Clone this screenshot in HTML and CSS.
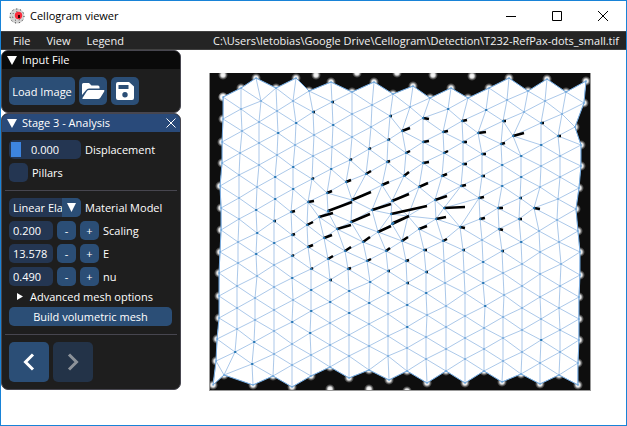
FILE: index.html
```html
<!DOCTYPE html>
<html lang="en">
<head>
<meta charset="utf-8">
<title>Cellogram viewer</title>
<link rel="stylesheet" href="styles.css">
</head>
<body>
<div class="window">
  <header class="titlebar">
    <svg class="app-icon" viewBox="0 0 16 16" aria-hidden="true">
      <circle cx="8" cy="8" r="7.5" fill="#d3d3d3"/>
      <circle cx="8" cy="8" r="7" fill="none" stroke="#222" stroke-width="1" stroke-dasharray="1 3"/>
      <circle cx="8" cy="8" r="4.5" fill="none" stroke="#444" stroke-width="1" stroke-dasharray="1 3"/>
      <circle cx="9.5" cy="7.500" r="3.700" fill="#fb2b3c"/>
      <rect x="9" y="7" width="2" height="3" fill="#300"/>
    </svg>
    <h1 class="app-title">Cellogram viewer</h1>
    <div class="window-buttons">
      <button type="button" aria-label="Minimize"><svg viewBox="0 0 10 10"><path d="M0 5.500H10"/></svg></button>
      <button type="button" aria-label="Maximize"><svg viewBox="0 0 10 10"><path d="M.5 .5H9.500V9.500H.5Z"/></svg></button>
      <button type="button" aria-label="Close"><svg viewBox="0 0 10 10"><path d="M0 0L10 10M10 0L0 10"/></svg></button>
    </div>
  </header>
  <nav class="menubar">
    <button type="button">File</button>
    <button type="button">View</button>
    <button type="button">Legend</button>
    <span class="path">C:\Users\letobias\Google Drive\Cellogram\Detection\T232-RefPax-dots_small.tif</span>
  </nav>
  <main class="workspace">
    <aside class="sidebar">
      <section class="panel">
        <h2 class="panel-head"><svg class="caret" viewBox="0 0 10 9"><path d="M0 0H10L5 9Z"/></svg>Input File</h2>
        <div class="panel-body">
          <div class="row">
            <button type="button" class="btn load">Load Image</button>
            <button type="button" class="btn tool" aria-label="Open folder"><svg viewBox="0 0 24 18"><path d="M1 13V2.500Q1 1 2.500 1H8L10.500 3.500H17Q18.500 3.500 18.500 5V6.500H8Q6 6.500 5 8.200Z"/><path d="M1.500 16L6 9Q6.700 8 8 8H22.500Q24 8 23.200 9.400L19.500 15.600Q18.800 17 17.300 17H2Q1 17 1.500 16Z"/></svg></button>
            <button type="button" class="btn tool" aria-label="Save"><svg viewBox="0 0 24 18"><path fill-rule="evenodd" d="M5 0H16L21 4.500V16Q21 18 19 18H5Q3 18 3 16V2Q3 0 5 0ZM5.500 3V7H15.500V3ZM12 10A2.700 2.700 0 1 0 12 15.400A2.700 2.700 0 1 0 12 10Z"/></svg></button>
          </div>
        </div>
      </section>
      <section class="panel active">
        <h2 class="panel-head"><svg class="caret" viewBox="0 0 10 9"><path d="M0 0H10L5 9Z"/></svg>Stage 3 - Analysis
          <button type="button" class="panel-close" aria-label="Close panel"><svg viewBox="0 0 10 10"><path d="M.5 .5L9.500 9.500M9.500 .5L.5 9.500"/></svg></button>
        </h2>
        <div class="panel-body">
          <div class="row">
            <span class="slider"><input type="range" id="disp" min="0" max="1" step="0.001" value="0"><output for="disp">0.000</output></span>
            <label for="disp">Displacement</label>
          </div>
          <div class="row"><input type="checkbox" id="pillars" class="check"><label for="pillars">Pillars</label></div>
          <hr>
          <div class="row">
            <span class="combo"><select id="model"><option>Linear Elasticity</option></select><svg viewBox="0 0 19 19" aria-hidden="true"><path d="M5 5H14L9.500 14Z"/></svg></span>
            <label for="model">Material Model</label>
          </div>
          <div class="row"><input class="num" id="scaling" type="text" value="0.200"><button type="button" class="btn step">-</button><button type="button" class="btn step">+</button><label for="scaling">Scaling</label></div>
          <div class="row"><input class="num" id="young" type="text" value="13.578"><button type="button" class="btn step">-</button><button type="button" class="btn step">+</button><label for="young">E</label></div>
          <div class="row"><input class="num" id="nu" type="text" value="0.490"><button type="button" class="btn step">-</button><button type="button" class="btn step">+</button><label for="nu">nu</label></div>
          <details class="advanced"><summary><svg viewBox="0 0 6 7"><path d="M0 0L6 3.500L0 7Z"/></svg>Advanced mesh options</summary></details>
          <button type="button" class="btn wide">Build volumetric mesh</button>
          <hr>
          <div class="row">
            <button type="button" class="btn nav" aria-label="Previous stage"><svg viewBox="0 0 12 18"><path d="M10 1.500L2.500 9L10 16.500"/></svg></button>
            <button type="button" class="btn nav" aria-label="Next stage" disabled><svg viewBox="0 0 12 18"><path d="M2 1.500L9.500 9L2 16.500"/></svg></button>
          </div>
        </div>
      </section>
    </aside>
    <div class="viewer">
      <svg class="mesh" id="mesh" viewBox="209 73 382 318" role="img" aria-label="Displacement mesh">
        <defs>
          <radialGradient id="dot"><stop offset="0" stop-color="#fff"/><stop offset=".4" stop-color="#fff" stop-opacity=".9"/><stop offset=".7" stop-color="#fff" stop-opacity=".35"/><stop offset="1" stop-color="#fff" stop-opacity="0"/></radialGradient>
          <clipPath id="inside"><path id="clip"/></clipPath>
          <clipPath id="photo"><rect x="210" y="73" width="380" height="317"/></clipPath>
        </defs>
        <rect class="frame" x="209" y="73" width="382" height="318"/>
        <rect class="image" x="210" y="73" width="380" height="317"/>
        <g id="dots" clip-path="url(#photo)"></g>
        <path id="outline" class="sheet"/>
        <path id="edges" class="edges" clip-path="url(#inside)"/>
        <path id="joints" class="joints"/>
        <path id="vectors" class="vectors"/>
        <path id="nodes" class="nodes"/>
      </svg>
    </div>
  </main>
</div>
<script src="mesh.js"></script>
</body>
</html>
```
FILE: styles.css
```css
* { box-sizing: border-box; }
body { margin: 0; background: #fff; font: 11px/19px "Open Sans", "Noto Sans", sans-serif; color: #fff; }
button, input, select { font: inherit; color: inherit; margin: 0; border: 0; padding: 0; }
button { background: none; }
.window { min-height: 100vh; border: 1px solid #1883d7; }

.titlebar { display: flex; align-items: center; height: 30px; padding-left: 8px; background: #fff; color: #000; }
.app-icon { width: 16px; height: 16px; margin-right: 5px; }
.app-title { margin: 0; font-size: 11px; line-height: 20px; font-weight: 400; }
.window-buttons { display: flex; margin-left: auto; }
.window-buttons button { width: 46px; height: 28px; display: grid; place-items: center; }
.window-buttons svg { width: 10px; height: 10px; fill: none; stroke: #000; overflow: visible; }

.menubar { display: flex; align-items: center; height: 19px; padding: 0 7px 0 12px; gap: 16px; background: #242424; border: 1px solid #414141; border-width: 1px 0; color: #f2f2f2; }
.path { margin-left: auto; white-space: nowrap; }

.workspace { display: flex; align-items: flex-start; }
.sidebar { flex: none; width: 180px; }
.panel { background: #1e1e1e; border: 1px solid #47464f; border-radius: 7px; overflow: hidden; }
.panel-head { display: flex; align-items: center; height: 18px; margin: 0; padding: 0 4px 0 5px; background: #0a0a0a; font-size: 11px; line-height: 18px; font-weight: 400; }
.active .panel-head { background: #294a7a; }
.caret { width: 10px; height: 9px; margin-right: 5px; fill: #fff; }
.panel-close { display: grid; margin-left: auto; }
.panel-close svg { width: 10px; height: 10px; fill: none; stroke: #fff; }
.panel-body { display: flex; flex-direction: column; gap: 4px; padding: 8px 7px 7px; }
.row { display: flex; align-items: center; gap: 4px; white-space: nowrap; }
hr { width: calc(100% + 8px); height: 1px; margin: 4px -4px 3px; border: 0; background: #47464f; }

.btn { border-radius: 5px; background: #2b4e76; text-align: center; }
.load { width: 66px; height: 28px; }
.tool { width: 28px; height: 28px; display: grid; place-items: center; }
.tool svg { width: 24px; height: 18px; fill: #fff; }
.step { width: 19px; height: 19px; line-height: 19px; }
.wide { height: 19px; margin-right: 1px; }
.nav { width: 40px; height: 40px; display: grid; place-items: center; }
.nav svg { width: 12px; height: 18px; fill: none; stroke: #fff; stroke-width: 3; }
.nav:disabled { background: #233348; }
.nav:disabled svg { stroke: #8c9299; }

.slider, .combo { display: grid; width: 72px; height: 19px; border-radius: 5px; background: #243652; overflow: hidden; }
.slider > *, .combo > * { grid-area: 1 / 1; }
.slider input { appearance: none; width: 100%; height: 19px; padding: 0 2px; background: none; }
.slider input::-webkit-slider-thumb { appearance: none; width: 10px; height: 15px; background: #3d85e0; }
.slider output { justify-self: center; pointer-events: none; }
.check { appearance: none; width: 19px; height: 19px; border-radius: 5px; background: #243652; }
.combo select { appearance: none; width: 53px; height: 19px; padding-left: 4px; background: none; outline: 0; text-overflow: clip; }
.combo svg { justify-self: end; width: 19px; height: 19px; background: #2b4e76; fill: #fff; pointer-events: none; }
.num { width: 44px; height: 19px; padding-left: 4px; border-radius: 5px; background: #243652; }
.advanced summary { display: flex; align-items: center; height: 13px; padding-left: 8px; line-height: 13px; list-style: none; white-space: nowrap; }
.advanced svg { width: 6px; height: 7px; margin-right: 7px; fill: #fff; }

.viewer { flex: 1; min-width: 0; padding: 23px 35px 0 28px; }
.mesh { display: block; width: 100%; height: auto; }
.frame { fill: #999; }
.image { fill: #0e0e0e; }
.sheet { fill: #fff; stroke: #6ca6dc; stroke-width: 1; }
.edges { fill: none; stroke: #86b0e0; stroke-width: .7; }
.joints { fill: none; stroke: #5f9fd6; stroke-width: 1.500; stroke-linecap: round; }
.vectors { fill: none; stroke: #000; stroke-width: 2.500; }
.nodes { fill: none; stroke: #2878b4; stroke-width: 2; stroke-linecap: round; }
```
FILE: mesh.js
```js
// Mesh vertices, one string of "x,y" pairs per column, top to bottom.
const columns = [
  "223,97 223,119 222,142 222,163 220,186 221,208 221,230 220,252 219,273 219,296 219,318 217,339 216,361 213,385",
  "241,88 241,109 242,131 240,153 239,175 239,198 239,219 238,242 238,263 237,286 237,308 237,329 235,352 224,375",
  "256,78 261,101 259,122 259,143 259,165 257,187 256,210 257,233 256,254 257,276 255,298 255,320 254,342 252,364 253,385",
  "276,88 277,111 278,133 277,155 275,177 275,199 274,221 274,243 274,265 274,287 274,310 274,331 274,354 273,376",
  "296,78 293,101 296,123 295,145 293,167 293,189 291,212 292,235 292,256 292,278 293,300 292,322 292,344 292,365 292,387",
  "309,91 313,112 314,135 313,156 312,179 308,202 307,225 308,247 311,269 311,290 311,311 310,333 311,355 311,376",
  "331,82 332,102 333,125 332,147 331,169 327,193 328,212 319,217 324,238 328,259 330,280 330,302 330,323 330,345 330,367",
  "352,92 352,114 352,137 350,160 346,182 352,200 351,222 337,229 345,251 348,269 349,291 349,313 349,335 349,356 349,378",
  "374,82 372,105 371,127 369,149 366,174 372,210 363,242 367,261 370,282 369,303 369,324 369,346 369,370",
  "393,94 390,116 388,140 387,162 382,185 392,201 391,214 392,224 378,232 386,251 388,271 388,293 388,314 388,336 388,356 389,380",
  "413,86 410,107 402,131 406,153 404,176 402,241 406,261 407,283 407,305 407,327 407,348 407,371",
  "430,98 423,118 423,142 423,163 419,187 408,216 419,229 424,250 426,272 426,293 427,315 426,337 426,359 427,383",
  "451,88 448,109 443,132 444,153 442,176 435,200 444,208 436,219 443,241 444,261 445,283 446,306 446,327 446,349 446,371",
  "468,98 462,121 463,142 463,164 461,186 460,227 463,250 464,272 465,293 465,316 465,338 465,359 465,383",
  "489,88 486,110 478,133 482,154 482,176 479,198 480,219 482,240 483,262 483,283 485,306 484,328 484,349 484,371",
  "509,78 507,100 503,121 501,144 502,165 502,186 498,208 499,229 502,251 503,273 504,295 503,317 503,338 503,361 502,382",
  "528,91 524,112 513,136 521,156 521,177 520,198 519,219 521,242 522,264 522,286 522,308 522,330 522,352 521,374",
  "547,79 545,101 541,123 541,145 541,166 540,187 534,208 539,231 540,252 540,274 540,297 541,319 541,340 540,363 540,384",
  "566,92 562,114 558,136 560,156 560,177 558,199 557,220 559,242 561,264 560,286 559,308 560,330 560,352 559,375",
  "586,81 584,103 575,127 581,145 581,166 579,188 576,209 578,231 580,252 580,275 579,297 579,319 579,340 578,363 578,385"
].map(c => c.split(" ").map(p => p.split(",").map(Number)));

// Displacement vectors: x, y, dx, dy.
const vectors = [
  [328,211,23,-9],[352,200,18,-8],[319,217,13,-4],[372,210,18,-6],[351,222,18,-8],[392,201,16,-7],
  [391,214,35,-8],[392,224,16,-8],[337,229,13,-4],[378,232,12,-6],[393,223,13,-6],[444,208,20,-1],
  [436,219,9,-2],[435,200,11,-4],[419,187,8,-4],[419,229,7,-3],[402,131,7,-3],[406,153,3,-2],
  [404,176,4,-4],[423,118,5,1],[423,142,5,-1],[423,163,5,-1],[443,132,4,-1],[444,153,3,-2],
  [442,176,4,-2],[462,121,4,-1],[463,142,3,0],[463,164,3,0],[461,186,4,-1],[478,133,7,-1],
  [482,154,3,0],[482,176,2,0],[479,198,4,-1],[480,219,4,-1],[460,227,4,1],[498,208,4,0],
  [499,229,3,1],[501,144,3,-1],[503,121,2,0],[513,136,10,-3],[534,208,5,1],[519,219,2,0],
  [520,198,1,0],[541,123,2,0],[558,136,2,0],[502,251,1,0],[402,241,5,-4],[406,261,2,-1],
  [407,283,1,0],[424,250,2,0],[443,241,3,-2],[463,250,1,0],[426,272,1,0],[363,242,6,-5],
  [367,261,3,-2],[386,251,3,-3],[388,271,1,0],[345,251,5,-4],[348,269,2,-1],[324,238,7,-3],
  [328,259,4,-3],[307,225,5,-3],[308,247,4,-2],[311,269,1,-1],[308,202,5,-1],[312,179,1,-1],
  [327,193,4,-2],[346,182,4,-2],[350,160,1,-1],[366,174,4,-3],[369,149,1,-1],[382,185,6,-3],
  [387,162,2,-1],[388,140,1,-1],[390,116,1,0],[332,102,1,0],[313,112,1,0],[291,212,3,-1],
  [292,235,2,-1],[292,256,1,-1],[274,221,1,0],[330,280,1,0]
];

// Vertices with a displacement too small for a bar.
const minor = [
  [370,282],[331,169],[333,125],[278,133],[448,109],[486,110],[502,165],[502,186],[521,156],[521,177],
  [292,278],[311,290],[330,302],[349,291],[369,303],[407,305],[407,327],[293,189],[293,167],[275,177],
  [541,145],[296,123],[256,210],[257,233],[256,254],[275,199],[274,243],[426,293],[483,283],[485,306],
  [311,311],[310,333],[292,322],[388,293],[349,313],[541,340],[235,352],[254,342],[252,364],[521,242],[483,262]
];

// Bright spots outside the meshed area.
const looseDots = [[223,75],[316,75],[357,73],[397,73],[433,75],[472,76],[330,389],[369,389],[407,391]];

const last = a => a[a.length - 1];
const path = pts => "M" + pts.map(p => p.join(" ")).join("L");
const boundary = [
  ...columns.slice(0, -1).map(c => c[0]),
  ...last(columns),
  ...columns.slice(1, -1).map(last).reverse(),
  ...[...columns[0]].reverse()
];

function circumcircle(a, b, c) {
  const d = 2 * (a[0] * (b[1] - c[1]) + b[0] * (c[1] - a[1]) + c[0] * (a[1] - b[1]));
  const [A, B, C] = [a, b, c].map(p => p[0] * p[0] + p[1] * p[1]);
  const x = (A * (b[1] - c[1]) + B * (c[1] - a[1]) + C * (a[1] - b[1])) / d;
  const y = (A * (c[0] - b[0]) + B * (a[0] - c[0]) + C * (b[0] - a[0])) / d;
  return { x, y, r: Math.hypot(a[0] - x, a[1] - y) };
}

// Incremental Delaunay triangulation; returns unique edges.
function triangulate(source) {
  const n = source.length;
  const pts = source.map(([x, y], i) => [x + Math.sin(i * 7) * .01, y + Math.cos(i * 5) * .01]);
  pts.push([-5000, -4000], [6000, -4100], [400, 7000]);
  const make = (a, b, c) => ({ v: [a, b, c], o: circumcircle(pts[a], pts[b], pts[c]) });
  let tris = [make(n, n + 1, n + 2)];
  for (let i = 0; i < n; i++) {
    const rim = new Map();
    tris = tris.filter(t => {
      if (Math.hypot(pts[i][0] - t.o.x, pts[i][1] - t.o.y) >= t.o.r) return true;
      for (let k = 0; k < 3; k++) {
        const e = [t.v[k], t.v[(k + 1) % 3]].sort((a, b) => a - b);
        const key = e.join();
        if (rim.has(key)) rim.delete(key); else rim.set(key, e);
      }
      return false;
    });
    for (const [a, b] of rim.values()) tris.push(make(a, b, i));
  }
  const edges = new Map();
  for (const t of tris) for (let k = 0; k < 3; k++) {
    const e = [t.v[k], t.v[(k + 1) % 3]].sort((a, b) => a - b);
    if (e[1] < n) edges.set(e.join(), e);
  }
  return [...edges.values()];
}

const set = (id, d) => document.getElementById(id).setAttribute("d", d);
const points = columns.flat();
set("outline", path(boundary) + "Z");
set("clip", path(boundary) + "Z");
set("edges", triangulate(points).map(([a, b]) => path([points[a], points[b]])).join(""));
set("joints", points.map(([x, y]) => `M${x} ${y}h.1`).join(""));
set("vectors", vectors.map(([x, y, dx, dy]) => `M${x} ${y}l${dx + 1} ${dy}`).join(""));
set("nodes", [...vectors, ...minor].map(([x, y]) => `M${x} ${y}h.5`).join(""));
document.getElementById("dots").innerHTML = [...boundary, ...looseDots]
  .map(([x, y]) => `<circle cx="${x}" cy="${y}" r="5" fill="url(#dot)"/>`).join("");
```
